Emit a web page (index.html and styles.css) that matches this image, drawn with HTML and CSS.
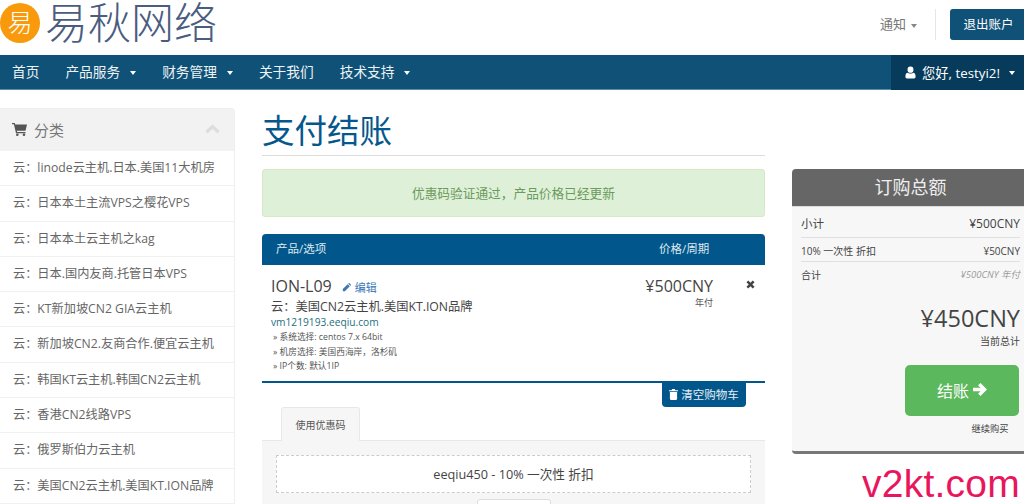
FILE: index.html
```html
<!DOCTYPE html>
<html lang="zh">
<head>
<meta charset="utf-8">
<title>支付结账</title>
<link rel="stylesheet" href="styles.css">
</head>
<body>
<div class="page">
  <header class="top">
    <div class="brand">
      <span class="brand-mark">易</span>
      <span class="brand-name">易秋网络</span>
    </div>
    <div class="top-actions">
      <span class="notify">通知<i class="caret caret-grey"></i></span>
      <span class="top-sep"></span>
      <a class="logout">退出账户</a>
    </div>
  </header>
  <nav class="nav">
    <ul class="nav-list">
      <li>首页</li>
      <li>产品服务<i class="caret"></i></li>
      <li>财务管理<i class="caret"></i></li>
      <li>关于我们</li>
      <li>技术支持<i class="caret"></i></li>
    </ul>
    <div class="nav-user">
      <svg class="icon-user" viewBox="0 0 12 14" width="11" height="13"><path fill="#fff" d="M6 0.5a3.2 3.2 0 0 1 3.2 3.4A3.2 3.2 0 0 1 6 7.3a3.2 3.2 0 0 1-3.2-3.4A3.2 3.2 0 0 1 6 0.5zM3 7.2c.8.6 1.8 1 3 1s2.200-.4 3-1c1.600.2 2.500 1.500 2.500 3.500v1.300c0 .9-.7 1.500-1.500 1.500H2c-.8 0-1.500-.6-1.500-1.500v-1.300c0-2 .9-3.300 2.500-3.500z"/></svg>
      <span>您好, testyi2!</span><i class="caret"></i>
    </div>
  </nav>
  <div class="content">
    <aside class="side">
      <div class="side-head">
        <svg viewBox="0 0 15 14" width="15" height="14"><path fill="#555" d="M0 1h2.800l.4 1.500H15l-1.500 6.300H4.800l.3 1.200h8.400v1.200H4L1.900 2.300H0z"/><circle cx="5.300" cy="12.700" r="1.300" fill="#555"/><circle cx="12" cy="12.700" r="1.300" fill="#555"/></svg>
        <span class="side-title">分类</span>
        <svg class="side-chev" viewBox="0 0 16 10" width="15" height="10"><path fill="none" stroke="#ddd" stroke-width="3.400" d="M1.500 8.500L8 2.500l6.500 6"/></svg>
      </div>
      <ul class="side-list">
        <li>云：linode云主机.日本.美国11大机房</li>
        <li>云：日本本土主流VPS之樱花VPS</li>
        <li>云：日本本土云主机之kag</li>
        <li>云：日本.国内友商.托管日本VPS</li>
        <li>云：KT新加坡CN2 GIA云主机</li>
        <li>云：新加坡CN2.友商合作.便宜云主机</li>
        <li>云：韩国KT云主机.韩国CN2云主机</li>
        <li>云：香港CN2线路VPS</li>
        <li>云：俄罗斯伯力云主机</li>
        <li>云：美国CN2云主机.美国KT.ION品牌</li>
      </ul>
    </aside>
    <main class="main">
      <h1 class="title">支付结账</h1>
      <div class="alert">优惠码验证通过，产品价格已经更新</div>
      <div class="cart-head"><span>产品/选项</span><span class="cart-head-price">价格/周期</span></div>
      <div class="cart-row">
        <div class="item">
          <div class="item-name">ION-L09 <a class="edit"><svg viewBox="0 0 12 12" width="10" height="10"><path fill="#3a77b5" d="M8.500 1l2.500 2.500-1 1L7.500 2zM6.800 2.700l2.500 2.500L3.500 11H1v-2.500z"/></svg> 编辑</a></div>
          <div class="item-group">云：美国CN2云主机.美国KT.ION品牌</div>
          <div class="item-domain">vm1219193.eeqiu.com</div>
          <div class="item-opt">» 系统选择: centos 7.x 64bit</div>
          <div class="item-opt">» 机房选择: 美国西海岸，洛杉矶</div>
          <div class="item-opt">» IP个数: 默认1IP</div>
        </div>
        <div class="price">
          <div class="price-main">¥500CNY</div>
          <div class="price-cycle">年付</div>
        </div>
        <svg class="remove" viewBox="0 0 10 10" width="9" height="9"><path stroke="#444" stroke-width="2.800" d="M1.500 1.500l7 7M8.500 1.500l-7 7"/></svg>
      </div>
      <div class="empty-wrap">
        <a class="empty"><svg viewBox="0 0 10 12" width="9" height="11"><path fill="#fff" d="M3.500 0h3l.6 1.200H10v1.300H0V1.200h2.900zM1 3.200h8v7.600c0 .7-.5 1.200-1.200 1.200H2.200C1.500 12 1 11.500 1 10.800z"/></svg> 清空购物车</a>
      </div>
      <div class="tabs"><span class="tab">使用优惠码</span></div>
      <div class="promo">
        <div class="promo-code">eeqiu450 - 10% 一次性 折扣</div>
        <div class="promo-btn"></div>
      </div>
    </main>
    <section class="summary">
      <div class="sum-head">订购总额</div>
      <div class="sum-body">
        <div class="sum-row sum-sub"><span>小计</span><span>¥500CNY</span></div>
        <div class="sum-row sum-small"><span>10% 一次性 折扣</span><span>¥50CNY</span></div>
        <div class="sum-row sum-small sum-last"><span>合计</span><em>¥500CNY 年付</em></div>
        <div class="sum-total">¥450CNY</div>
        <div class="sum-note">当前总计</div>
        <a class="checkout">结账 <svg viewBox="0 0 14 14" width="15" height="15"><path fill="none" stroke="#fff" stroke-width="3.200" d="M1 7h10M6.800 2l5 5-5 5"/></svg></a>
        <div class="continue">继续购买</div>
      </div>
    </section>
  </div>
  <div class="watermark">v2kt.com</div>
</div>
</body>
</html>
```
FILE: styles.css
```css
* { box-sizing: border-box; }
html, body { margin: 0; padding: 0; height: 504px; overflow: hidden; background: #fff; }
body { font-family: "Open Sans", "Noto Sans CJK SC", sans-serif; font-size: 12px; color: #333; }
ul { list-style: none; margin: 0; padding: 0; }
.page { position: relative; width: 1024px; height: 504px; overflow: hidden; }

.top { height: 55px; display: flex; justify-content: space-between; }
.brand { display: flex; align-items: flex-start; gap: 5px; }
.brand-mark { width: 40px; height: 40px; margin-top: 3px; border-radius: 50%; background: #f89a0c; color: #fff; font-size: 25px; font-weight: 300; line-height: 38px; text-align: center; }
.brand-name { font-size: 43px; line-height: 46px; margin-top: 1px; color: #4a5c80; font-weight: 300; font-family: "Liberation Sans", "Noto Sans CJK SC", sans-serif; }
.top-actions { display: flex; align-items: flex-start; padding-top: 9px; }
.notify { font-size: 13px; color: #777; margin-top: 6px; line-height: 18px; }
.top-sep { width: 1px; height: 31px; background: #e6e6e6; margin: 0 14px 0 18px; }
.logout { width: 74px; height: 31px; background: #0f5177; color: #fff; border-radius: 3px 0 0 3px; font-size: 12.500px; line-height: 31px; padding-left: 3px; text-align: center; }

.caret { display: inline-block; width: 0; height: 0; margin-left: 10px; vertical-align: middle; border-top: 4px solid #fff; border-left: 3.500px solid transparent; border-right: 3.500px solid transparent; }
.caret-grey { border-top-color: #888; margin-left: 5px; }

.nav { height: 35px; background: #0f5177; border-bottom: 1px solid #5f8aa5; display: flex; justify-content: space-between; color: #fff; }
.nav-list { display: flex; padding-left: 12px; gap: 26px; font-size: 13.700px; line-height: 33px; color: #eef3f6; }
.nav-user { width: 133px; background: #073b5b; display: flex; align-items: center; padding-left: 14px; gap: 6px; font-size: 13.300px; margin-bottom: -1px; }
.nav-user .caret { margin-left: 3px; }

.content { display: grid; grid-template-columns: 235px 503px 240px; column-gap: 27px; padding-top: 18px; }

.side { border: 1px solid #eee; border-left: 0; border-radius: 0 4px 0 0; height: 500px; }
.side-head { height: 42px; background: #f2f2f2; display: flex; align-items: center; padding: 0 14px 2px 12px; gap: 7px; }
.side-title { font-size: 15px; color: #777; flex: 1; }
.side-list li { height: 35.300px; padding-left: 13px; border-bottom: 1px solid #f1f1f1; font-size: 12.200px; line-height: 34px; color: #666; white-space: nowrap; }

.main { min-width: 0; }
.title { margin: 0; height: 48px; border-bottom: 1px solid #ddd; font-size: 32.500px; font-weight: 400; line-height: 46px; color: #06578c; }
.alert { margin-top: 13px; height: 48px; background: #dff0d8; border: 1px solid #d6e9c6; border-radius: 3px; color: #6b9a5c; font-size: 12.700px; line-height: 46px; text-align: center; }
.cart-head { margin-top: 17px; height: 31px; background: #01578b; border-radius: 4px 4px 0 0; color: #dfe9f0; display: flex; font-size: 11.500px; line-height: 30px; padding-left: 14px; }
.cart-head-price { margin-left: auto; width: 106px; }
.cart-row { height: 118px; border-bottom: 2px solid #01578b; display: flex; padding: 9px 0 0 9px; position: relative; }
.item { flex: 1; }
.item-name { font-size: 16px; line-height: 24px; color: #444; }
.edit { font-size: 11px; color: #3a77b5; margin-left: 6px; }
.item-group { font-size: 12.250px; line-height: 16px; margin-top: -1px; color: #444; }
.item-domain { font-size: 10.200px; line-height: 15px; color: #236f80; }
.item-opt { font-size: 8.700px; line-height: 14.700px; padding-left: 2px; color: #555; }
.price { width: 70px; margin-right: 52px; text-align: right; }
.price-main { font-size: 16px; line-height: 24px; color: #444; }
.price-cycle { font-size: 9px; line-height: 14px; margin-top: -2px; color: #555; }
.remove { position: absolute; right: 10px; top: 15px; }
.empty-wrap { display: flex; justify-content: flex-end; padding-right: 19px; }
.empty { width: 84px; height: 24px; background: #01578b; color: #e6eef4; border-radius: 0 0 4px 4px; font-size: 11.500px; line-height: 24px; text-align: center; white-space: nowrap; }
.empty svg { vertical-align: -1px; }
.tabs { height: 34px; padding-left: 19px; border-bottom: 1px solid #e8e8e8; }
.tab { display: block; width: 79px; height: 34px; background: #f6f6f6; border: 1px solid #e8e8e8; border-bottom: 0; border-radius: 3px 3px 0 0; font-size: 10px; line-height: 34px; text-align: center; color: #555; }
.promo { background: #f6f6f6; padding: 14px 14px 0; height: 63px; }
.promo-code { height: 38px; background: #fff; border: 1px dashed #ccc; font-size: 12.700px; line-height: 36px; text-align: center; color: #444; }
.promo-btn { width: 74px; height: 20px; margin: 6px auto 0; background: #fff; border: 1px solid #ddd; border-radius: 3px; }

.summary { margin-top: 61px; height: 285px; background: #f7f7f7; border-bottom: 3px solid #777; border-radius: 4px 0 0 4px; }
.sum-head { height: 38px; background: #666; color: #eee; border-radius: 4px 0 0 0; border-bottom: 1px solid #ddd; font-size: 18px; line-height: 36px; padding-right: 3px; text-align: center; }
.sum-body { padding: 0 4px 0 9px; width: 232px; }
.sum-row { display: flex; justify-content: space-between; border-bottom: 1px solid #e0e0e0; color: #444; white-space: nowrap; }
.sum-sub { height: 31px; font-size: 12px; line-height: 34px; }
.sum-sub span:first-child { font-size: 11.500px; }
.sum-small { height: 24px; font-size: 10px; line-height: 26px; }
.sum-last { border-bottom: 0; }
.sum-last em { color: #999; font-size: 9.500px; }
.sum-total { margin-top: 14px; font-size: 23.500px; line-height: 36px; text-align: right; color: #444; }
.sum-note { font-size: 10px; line-height: 14px; margin-top: -2px; text-align: right; color: #444; }
.checkout { display: flex; align-items: center; justify-content: center; gap: 3px; margin: 17px 0 0 104px; padding-bottom: 2px; width: 114px; height: 51px; background: #5cb85c; border-radius: 5px; color: #fff; font-size: 16px; }
.continue { width: 114px; margin-left: 104px; margin-top: 6px; padding-left: 56px; font-size: 9.250px; line-height: 14px; text-align: center; color: #444; white-space: nowrap; }

.watermark { position: absolute; left: 862px; top: 464px; font-family: "Liberation Sans", sans-serif; font-size: 39px; letter-spacing: 0.250px; line-height: 40px; color: #e8175d; }
```
